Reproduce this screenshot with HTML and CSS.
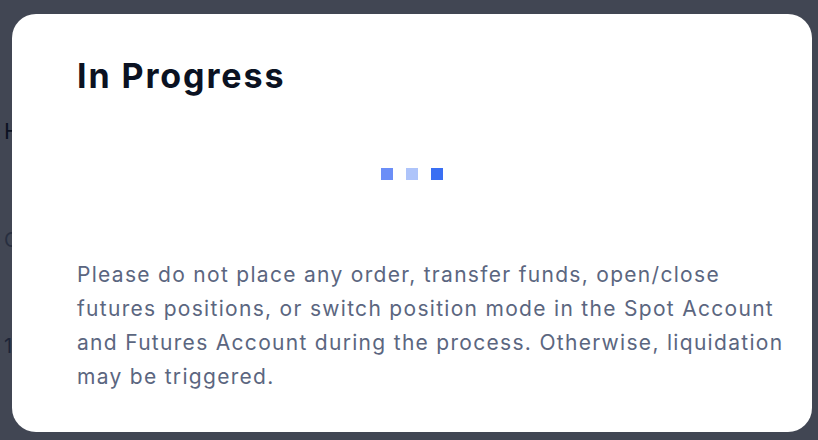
FILE: index.html
```html
<!DOCTYPE html>
<html lang="en">
<head>
<meta charset="utf-8">
<title>In Progress</title>
<link rel="stylesheet" href="styles.css">
</head>
<body>
<div class="page">
  <div class="page-title">History</div>
  <div class="page-label">Orders</div>
  <div class="page-value">1.00</div>
</div>
<div class="overlay">
  <div class="modal">
    <h1 class="modal-title">In Progress</h1>
    <div class="loader">
      <span class="dot dot-a"></span>
      <span class="dot dot-b"></span>
      <span class="dot dot-c"></span>
    </div>
    <p class="modal-text">Please do not place any order, transfer funds, open/close futures positions, or switch position mode in the Spot Account and Futures Account during the process. Otherwise, liquidation may be triggered.</p>
  </div>
</div>
</body>
</html>
```
FILE: styles.css
```css
html, body {
  margin: 0;
  padding: 0;
  width: 818px;
  height: 440px;
  overflow: hidden;
  font-family: Inter, "Noto Sans", sans-serif;
}
.page {
  padding: 116px 0 0 4px;
  color: #0b1222;
  background: #fff;
  height: 440px;
  box-sizing: border-box;
}
.page-title {
  font-size: 22px;
  line-height: 30px;
}
.page-label {
  margin-top: 82px;
  font-size: 20px;
  color: #8a93a6;
}
.page-value {
  margin-top: 82px;
  font-size: 20px;
  color: #5b6680;
}
.overlay {
  position: fixed;
  inset: 0;
  background: rgba(11, 18, 34, 0.78);
  padding: 14px 6px 8px 12px;
  box-sizing: border-box;
}
.modal {
  background: #fff;
  border-radius: 24px;
  height: 418px;
  box-sizing: border-box;
  padding: 40px 22px 0 65px;
}
.modal-title {
  margin: 0;
  font-size: 34px;
  line-height: 44px;
  font-weight: 700;
  color: #0b1222;
  letter-spacing: 1.9px;
}
.loader {
  display: flex;
  justify-content: center;
  gap: 13px;
  margin: 70px 0 0 -43px;
  height: 12px;
}
.dot {
  width: 12px;
  height: 12px;
}
.dot-a { background: #6b8ef7; }
.dot-b { background: #aec4fa; }
.dot-c { background: #3a6ff3; }
.modal-text {
  margin: 78px 0 0;
  font-size: 21px;
  line-height: 34px;
  color: #5b6680;
  letter-spacing: 1.3px;
}
```
